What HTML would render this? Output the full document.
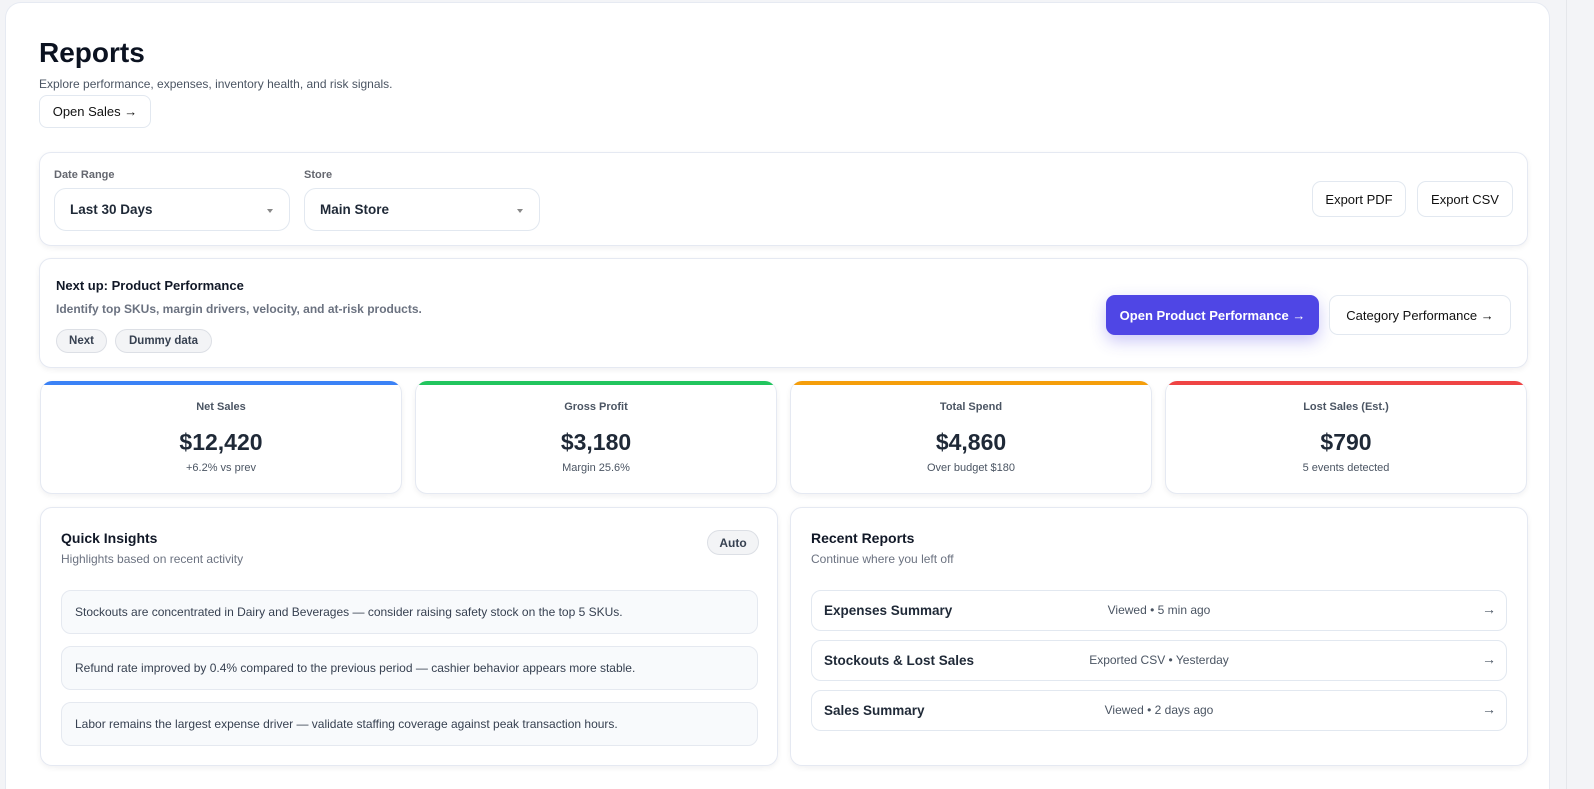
<!DOCTYPE html>
<html><head><meta charset="utf-8"><meta name="viewport" content="width=1594"><style>
*{box-sizing:border-box;margin:0;padding:0}
html,body{width:1594px;height:789px;overflow:hidden;margin:0}
body{background:#f3f4f7;font-family:"Liberation Sans",sans-serif;color:#111827}
#root{position:relative;width:1594px;height:789px;overflow:hidden}
.a{position:absolute}
.wrap{left:5px;top:2px;width:1545px;height:787px;background:#fff;border:1px solid #e6eaf2;border-bottom:none;border-radius:16px 16px 0 0}
.card{background:#fff;border:1px solid #e5e9f2;border-radius:12px;box-shadow:0 2px 6px rgba(15,23,42,.06)}
.btn{background:#fff;border:1px solid #e2e8f0;border-radius:9px;font-size:13px;display:flex;align-items:center;justify-content:center;color:#111}
.lbl{font-size:11px;font-weight:bold;color:#64676f}
.sel{border:1px solid #e2e8f0;border-radius:12px;font-size:13.5px;font-weight:bold;color:#1f2937;padding-left:15px;display:flex;align-items:center}
.sel:after{content:"";position:absolute;right:16px;top:20px;border:3px solid transparent;border-top:4px solid #888}
.chip{border:1px solid #dcdfe5;background:#f3f4f6;border-radius:14px;font-size:11.5px;font-weight:bold;color:#374151;display:flex;align-items:center;justify-content:center}
.kpi{top:381px;height:113px;width:362px;text-align:center;overflow:hidden;border-top:none}
.kpi .bar{position:absolute;left:0;right:0;top:0;height:4px}
.kpi .l{position:absolute;top:20px;width:100%;font-size:11px;font-weight:bold;color:#4b5563}
.kpi .v{position:absolute;top:48px;width:100%;font-size:23px;font-weight:bold;color:#1f2937}
.kpi .s{position:absolute;top:81px;width:100%;font-size:11px;color:#4b5563}
.ins{left:20px;width:697px;height:44px;background:#f8fafc;border:1px solid #e5e9f0;border-radius:10px;font-size:12px;color:#374151;padding-left:13px;display:flex;align-items:center}
.row{left:20px;width:696px;height:41px;border:1px solid #e2e8f0;border-radius:10px}
.row b{position:absolute;left:12px;top:12px;font-size:13.5px;color:#1f2937}
.row span{position:absolute;top:12px;font-size:12px;color:#4b5563;left:0;right:0;text-align:center}
.row i{position:absolute;right:10px;top:10px;font-style:normal;font-size:14px;color:#4b5563}
</style></head><body><div id="root">
<div class="a wrap"></div>
<div class="a" style="left:39px;top:37px;font-size:28px;font-weight:bold;color:#0b1220">Reports</div>
<div class="a" style="left:39px;top:77px;font-size:12px;color:#4b5563">Explore performance, expenses, inventory health, and risk signals.</div>
<div class="a btn" style="left:39px;top:95px;width:112px;height:33px;border-radius:8px">Open Sales →</div>

<div class="a card" style="left:39px;top:152px;width:1489px;height:94px">
 <div class="a lbl" style="left:14px;top:16px">Date Range</div>
 <div class="a lbl" style="left:264px;top:16px">Store</div>
 <div class="a sel" style="left:14px;top:35px;width:236px;height:43px">Last 30 Days</div>
 <div class="a sel" style="left:264px;top:35px;width:236px;height:43px">Main Store</div>
 <div class="a btn" style="left:1272px;top:28px;width:94px;height:36px">Export PDF</div>
 <div class="a btn" style="left:1377px;top:28px;width:96px;height:36px">Export CSV</div>
</div>

<div class="a card" style="left:39px;top:258px;width:1489px;height:110px">
 <div class="a" style="left:16px;top:19px;font-size:13px;font-weight:bold">Next up: Product Performance</div>
 <div class="a" style="left:16px;top:43px;font-size:12px;font-weight:bold;color:#6b7280">Identify top SKUs, margin drivers, velocity, and at-risk products.</div>
 <div class="a chip" style="left:16px;top:70px;width:51px;height:24px">Next</div>
 <div class="a chip" style="left:75px;top:70px;width:97px;height:24px">Dummy data</div>
 <div class="a" style="left:1066px;top:36px;width:213px;height:40px;background:#4f46e5;border-radius:9px;color:#fff;font-size:13px;font-weight:bold;display:flex;align-items:center;justify-content:center;box-shadow:0 6px 16px rgba(79,70,229,.3)">Open Product Performance →</div>
 <div class="a btn" style="left:1289px;top:36px;width:182px;height:40px">Category Performance →</div>
</div>

<div class="a card kpi" style="left:40px"><div class="bar" style="background:#3b82f6"></div><div class="l">Net Sales</div><div class="v">$12,420</div><div class="s">+6.2% vs prev</div></div>
<div class="a card kpi" style="left:415px"><div class="bar" style="background:#22c55e"></div><div class="l">Gross Profit</div><div class="v">$3,180</div><div class="s">Margin 25.6%</div></div>
<div class="a card kpi" style="left:790px"><div class="bar" style="background:#f59e0b"></div><div class="l">Total Spend</div><div class="v">$4,860</div><div class="s">Over budget $180</div></div>
<div class="a card kpi" style="left:1165px"><div class="bar" style="background:#ef4444"></div><div class="l">Lost Sales (Est.)</div><div class="v">$790</div><div class="s">5 events detected</div></div>

<div class="a card" style="left:40px;top:507px;width:738px;height:259px">
 <div class="a" style="left:20px;top:22px;font-size:14px;font-weight:bold">Quick Insights</div>
 <div class="a" style="left:20px;top:44px;font-size:12px;color:#6b7280">Highlights based on recent activity</div>
 <div class="a chip" style="left:666px;top:22px;width:52px;height:25px;font-size:12px">Auto</div>
 <div class="a ins" style="top:82px">Stockouts are concentrated in Dairy and Beverages — consider raising safety stock on the top 5 SKUs.</div>
 <div class="a ins" style="top:138px">Refund rate improved by 0.4% compared to the previous period — cashier behavior appears more stable.</div>
 <div class="a ins" style="top:194px">Labor remains the largest expense driver — validate staffing coverage against peak transaction hours.</div>
</div>

<div class="a card" style="left:790px;top:507px;width:738px;height:259px">
 <div class="a" style="left:20px;top:22px;font-size:14px;font-weight:bold">Recent Reports</div>
 <div class="a" style="left:20px;top:44px;font-size:12px;color:#6b7280">Continue where you left off</div>
 <div class="a row" style="top:82px"><b>Expenses Summary</b><span>Viewed • 5 min ago</span><i>→</i></div>
 <div class="a row" style="top:132px"><b>Stockouts &amp; Lost Sales</b><span>Exported CSV • Yesterday</span><i>→</i></div>
 <div class="a row" style="top:182px"><b>Sales Summary</b><span>Viewed • 2 days ago</span><i>→</i></div>
</div>
<div class="a" style="left:1566px;top:0;width:1px;height:789px;background:#e5e7eb"></div>
</div></body></html>
